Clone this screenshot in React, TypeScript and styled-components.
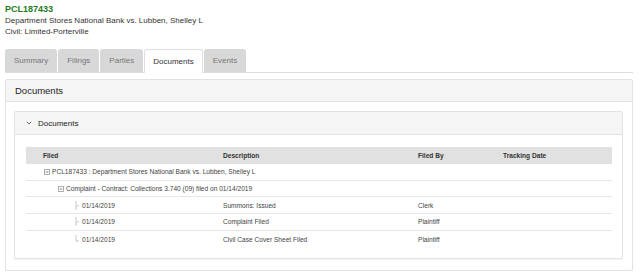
import React from "react";
import styled, { createGlobalStyle, css } from "styled-components";

const GlobalStyle = createGlobalStyle`
  body {
    margin: 0;
    background: #fff;
    font-family: "Liberation Sans", Arial, sans-serif;
    color: #333;
  }
`;

//styled
const Page = styled.div`
  padding: 4px 7px 0 5px;
`;
const CaseHeader = styled.div`
  display: flex;
  flex-direction: column;
`;
const CaseNumber = styled.div`
  font-size: 9px;
  line-height: 11px;
  font-weight: bold;
  color: #1e7b1e;
`;
const CaseLine = styled.div`
  font-size: 8px;
  line-height: 11px;
  color: #333;
`;
const TabList = styled.div`
  display: flex;
  gap: 1px;
  margin-top: 12px;
  border-bottom: 1px solid #dedede;
`;
const Tab = styled.div<{ $active?: boolean }>`
  height: 23px;
  padding: 0 9px;
  display: flex;
  align-items: center;
  font-size: 8px;
  color: #777;
  background: #d8d8d8;
  border-radius: 3px 3px 0 0;
  box-sizing: border-box;
  ${(p) =>
    p.$active &&
    css`
      background: #fff;
      color: #333;
      border: 1px solid #dedede;
      border-bottom: none;
      height: 24px;
      margin-bottom: -1px;
      padding: 0 8px;
    `}
`;
const Panel = styled.div<{ $inner?: boolean }>`
  border: 1px solid #e2e2e2;
  border-radius: 2px;
  background: #fff;
  box-shadow: 0 1px 1px rgba(0, 0, 0, 0.05);
  margin-top: ${(p) => (p.$inner ? "0" : "6px")};
`;
const PanelHeader = styled.div<{ $inner?: boolean }>`
  height: ${(p) => (p.$inner ? "22px" : "21px")};
  display: flex;
  align-items: center;
  gap: 6px;
  padding-left: ${(p) => (p.$inner ? "11px" : "9px")};
  background: #f5f5f5;
  border-bottom: 1px solid #e2e2e2;
  font-size: ${(p) => (p.$inner ? "8px" : "9.5px")};
  color: #222;
`;
const PanelBody = styled.div<{ $inner?: boolean }>`
  padding: ${(p) => (p.$inner ? "12px 10px 11px 11px" : "9px 9px 11px 8px")};
`;
const Grid = styled.div`
  display: grid;
  grid-template-columns: 180px 195px 85px 1fr;
  font-size: 6.6px;
  color: #444;
`;
const HeadCell = styled.div`
  height: 17px;
  display: flex;
  align-items: center;
  padding-left: 17px;
  background: #e1e1e1;
  font-weight: bold;
  color: #333;
`;
const Cell = styled.div<{ $span?: boolean; $last?: boolean }>`
  height: 16.7px;
  box-sizing: border-box;
  display: flex;
  align-items: center;
  padding-left: 17px;
  border-bottom: ${(p) => (p.$last ? "none" : "1px solid #e6e6e6")};
  ${(p) =>
    p.$span &&
    css`
      grid-column: 1 / -1;
    `}
`;
const Indent = styled.span<{ $level: number }>`
  display: inline-flex;
  align-items: center;
  gap: 2px;
  margin-left: ${(p) => p.$level * 14 + 1}px;
`;
const Chevron = () => (
  <svg width="6" height="4" viewBox="0 0 6 4">
    <path d="M0.8 0.8 L3 3 L5.2 0.8" fill="none" stroke="#555" strokeWidth="0.9" />
  </svg>
);
const Collapse = () => (
  <svg width="6" height="6" viewBox="0 0 6 6">
    <rect x="0.5" y="0.5" width="5" height="5" fill="#fff" stroke="#999" strokeWidth="0.8" />
    <path d="M1.6 3 H4.4" stroke="#666" strokeWidth="0.8" />
  </svg>
);
const Branch = ({ last }: { last?: boolean }) => (
  <svg width="8" height="9" viewBox="0 0 8 9">
    <path d={last ? "M4 0 V6 H7" : "M4 0 V9 M4 5 H7"} fill="none" stroke="#c8c8c8" strokeWidth="1" />
  </svg>
);

const entries = [
  { date: "01/14/2019", desc: "Summons: Issued", by: "Clerk" },
  { date: "01/14/2019", desc: "Complaint Filed", by: "Plaintiff" },
  { date: "01/14/2019", desc: "Civil Case Cover Sheet Filed", by: "Plaintiff" },
];

const tabs = ["Summary", "Filings", "Parties", "Documents", "Events"];

const App = () => {
  return (
    <>
      <GlobalStyle />
      <Page>
        <CaseHeader>
          <CaseNumber>PCL187433</CaseNumber>
          <CaseLine>Department Stores National Bank vs. Lubben, Shelley L</CaseLine>
          <CaseLine>Civil: Limited-Porterville</CaseLine>
        </CaseHeader>
        <TabList>
          {tabs.map((t) => (
            <Tab key={t} $active={t === "Documents"}>
              {t}
            </Tab>
          ))}
        </TabList>
        <Panel>
          <PanelHeader>Documents</PanelHeader>
          <PanelBody>
            <Panel $inner>
              <PanelHeader $inner>
                <Chevron />
                Documents
              </PanelHeader>
              <PanelBody $inner>
                <Grid>
                  <HeadCell>Filed</HeadCell>
                  <HeadCell>Description</HeadCell>
                  <HeadCell>Filed By</HeadCell>
                  <HeadCell>Tracking Date</HeadCell>
                  <Cell $span>
                    <Indent $level={0}>
                      <Collapse />
                      PCL187433 : Department Stores National Bank vs. Lubben, Shelley L
                    </Indent>
                  </Cell>
                  <Cell $span>
                    <Indent $level={1}>
                      <Collapse />
                      Complaint - Contract: Collections 3.740 (09) filed on 01/14/2019
                    </Indent>
                  </Cell>
                  {entries.map((e, i) => {
                    const last = i === entries.length - 1;
                    return (
                      <React.Fragment key={i}>
                        <Cell $last={last}>
                          <Indent $level={2}>
                            <Branch last={last} />
                            {e.date}
                          </Indent>
                        </Cell>
                        <Cell $last={last}>{e.desc}</Cell>
                        <Cell $last={last}>{e.by}</Cell>
                        <Cell $last={last} />
                      </React.Fragment>
                    );
                  })}
                </Grid>
              </PanelBody>
            </Panel>
          </PanelBody>
        </Panel>
      </Page>
    </>
  );
};

export default App;
